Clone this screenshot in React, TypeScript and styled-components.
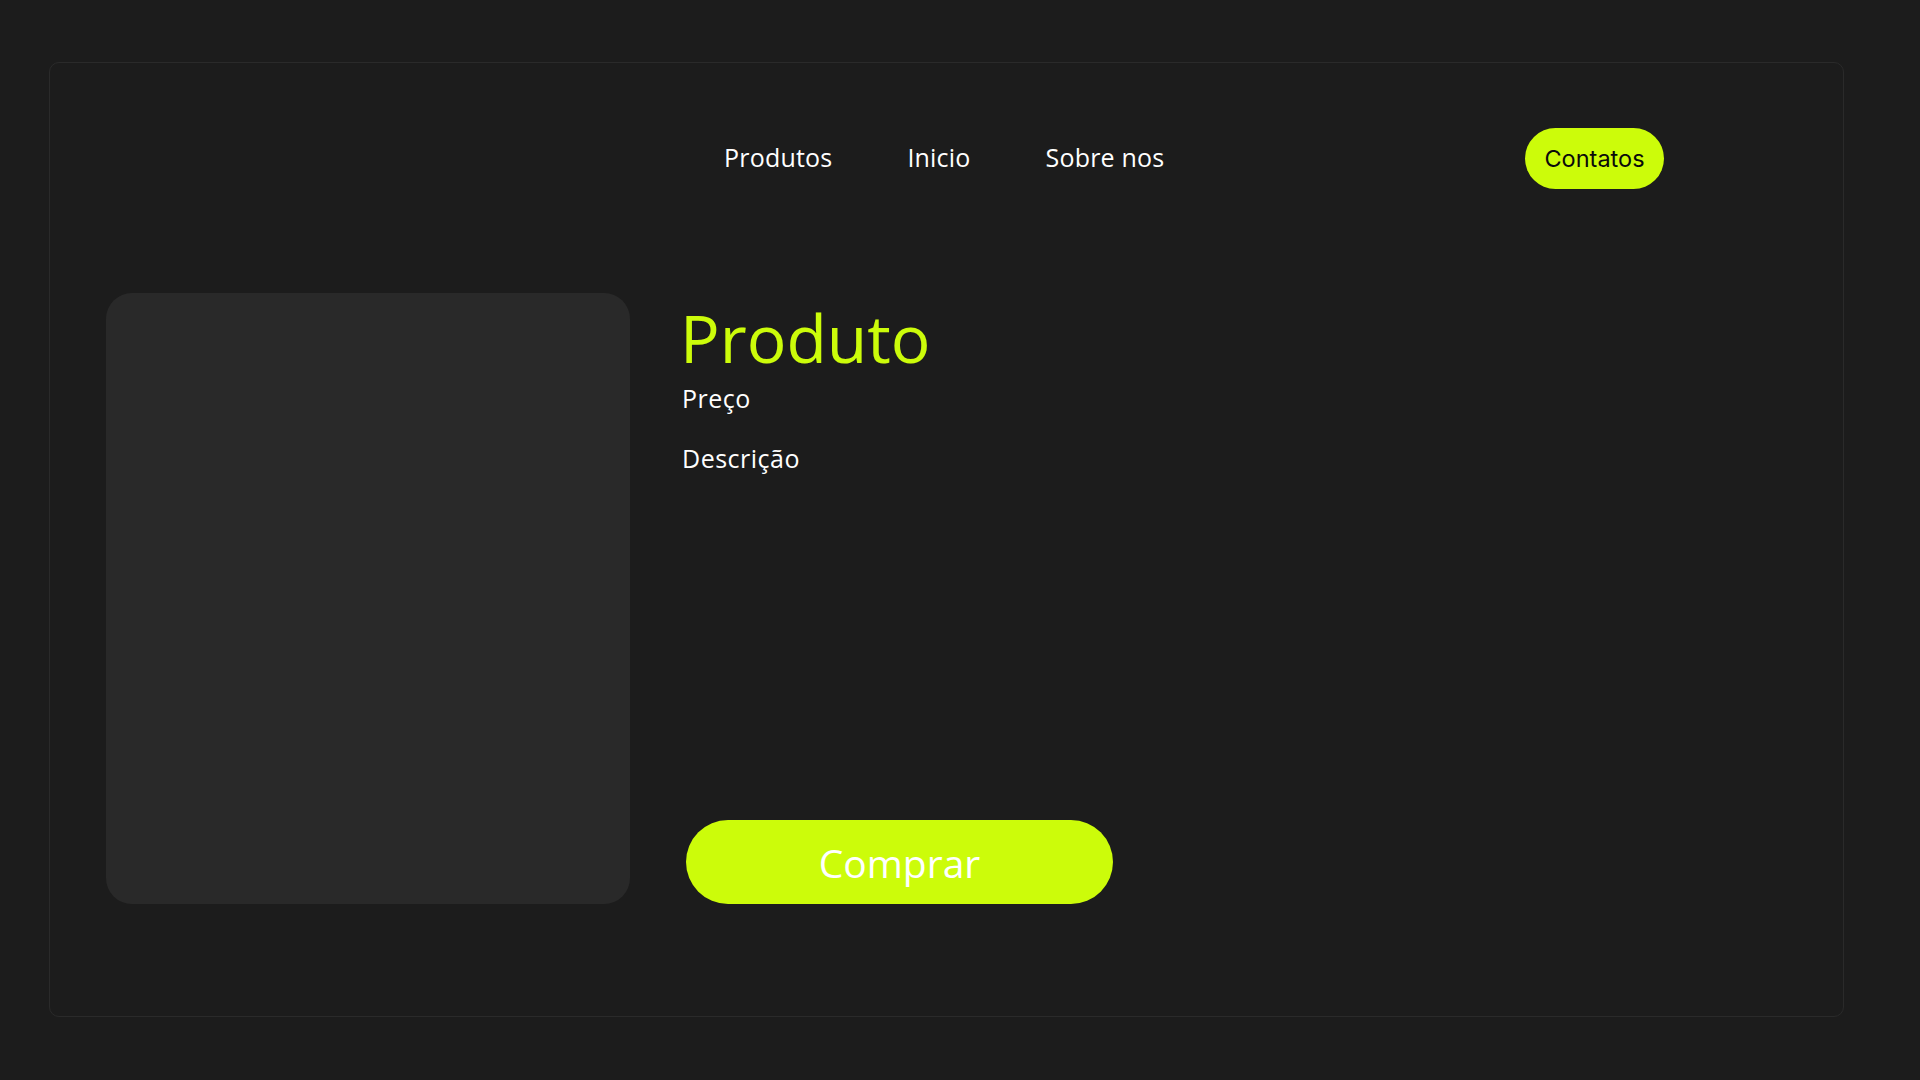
import React from "react";
import styled, { createGlobalStyle } from "styled-components";

const lime = "#ccfc0a";

const GlobalStyle = createGlobalStyle`
  html, body {
    margin: 0;
    padding: 0;
    background: #1c1c1c;
  }
  body {
    font-family: "Open Sans", "Liberation Sans", sans-serif;
    color: #ffffff;
  }
`;

const Page = styled.div`
  width: 1920px;
  height: 1080px;
  padding: 62px 0 0 49px;
  box-sizing: border-box;
`;

const Card = styled.div`
  width: 1795px;
  height: 955px;
  box-sizing: border-box;
  border: 1px solid #2a2a2a;
  border-radius: 10px;
  display: flex;
  flex-direction: column;
`;

const Header = styled.header`
  display: flex;
  align-items: center;
  padding: 65px 179px 0 674px;
  height: 61px;
`;

const Nav = styled.nav`
  display: flex;
  align-items: center;
  gap: 75px;
  margin-top: -2px;
`;

const NavLink = styled.a`
  font-size: 25px;
  line-height: 25px;
  letter-spacing: 0.2px;
  color: #ffffff;
  text-decoration: none;
  cursor: pointer;
`;

const ContactButton = styled.button`
  margin-left: auto;
  height: 61px;
  width: 139px;
  border: none;
  border-radius: 31px;
  background: ${lime};
  color: #0a0a0a;
  font-family: Inter, "Liberation Sans", sans-serif;
  font-size: 23.5px;
  padding: 0;
  cursor: pointer;
`;

const Main = styled.main`
  display: flex;
  gap: 53px;
  padding: 104px 0 0 56px;
`;

const ImageBox = styled.div`
  width: 524px;
  height: 611px;
  border-radius: 26px;
  background: #292929;
`;

const Info = styled.section`
  height: 611px;
  display: flex;
  flex-direction: column;
`;

const Title = styled.h1`
  margin: 11px 0 0 -3px;
  font-weight: 400;
  font-size: 66px;
  line-height: 66px;
  color: ${lime};
`;

const Text = styled.p<{ $top: number }>`
  margin: ${(p) => p.$top}px 0 0 -1px;
  font-size: 25px;
  line-height: 25px;
  letter-spacing: 0.5px;
  color: #ffffff;
`;

const BuyButton = styled.button`
  margin: auto 0 0 3px;
  width: 427px;
  height: 84px;
  border: none;
  border-radius: 42px;
  background: ${lime};
  color: #ffffff;
  font-family: "Open Sans", "Liberation Sans", sans-serif;
  font-size: 39px;
  padding: 0;
  cursor: pointer;
`;

export default function App() {
  return (
    <>
      <GlobalStyle />
      <Page>
        <Card>
          <Header>
            <Nav>
              <NavLink>Produtos</NavLink>
              <NavLink>Inicio</NavLink>
              <NavLink>Sobre nos</NavLink>
            </Nav>
            <ContactButton>Contatos</ContactButton>
          </Header>
          <Main>
            <ImageBox />
            <Info>
              <Title>Produto</Title>
              <Text $top={16}>Preço</Text>
              <Text $top={35}>Descrição</Text>
              <BuyButton>Comprar</BuyButton>
            </Info>
          </Main>
        </Card>
      </Page>
    </>
  );
}
